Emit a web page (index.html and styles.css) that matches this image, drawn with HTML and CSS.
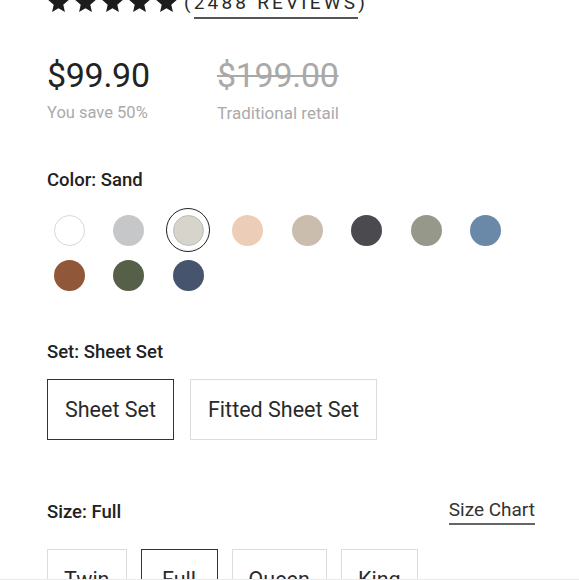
FILE: index.html
```html
<!DOCTYPE html>
<html>
<head>
<meta charset="utf-8">
<link rel="stylesheet" href="styles.css">
</head>
<body>
<main class="product">
  <div class="rating">
    <div class="stars">
      <svg viewBox="0 0 24 24" class="star"><path d="M12 1.5l3.1 7.1 7.7.7-5.8 5.1 1.7 7.6L12 18l-6.7 4 1.7-7.6-5.8-5.1 7.7-.7z"/></svg>
      <svg viewBox="0 0 24 24" class="star"><path d="M12 1.5l3.1 7.1 7.7.7-5.8 5.1 1.7 7.6L12 18l-6.7 4 1.7-7.6-5.8-5.1 7.7-.7z"/></svg>
      <svg viewBox="0 0 24 24" class="star"><path d="M12 1.5l3.1 7.1 7.7.7-5.8 5.1 1.7 7.6L12 18l-6.7 4 1.7-7.6-5.8-5.1 7.7-.7z"/></svg>
      <svg viewBox="0 0 24 24" class="star"><path d="M12 1.5l3.1 7.1 7.7.7-5.8 5.1 1.7 7.6L12 18l-6.7 4 1.7-7.6-5.8-5.1 7.7-.7z"/></svg>
      <svg viewBox="0 0 24 24" class="star"><path d="M12 1.5l3.1 7.1 7.7.7-5.8 5.1 1.7 7.6L12 18l-6.7 4 1.7-7.6-5.8-5.1 7.7-.7z"/></svg>
    </div>
    <span class="reviews">(<span class="reviews-link">2488 REVIEWS</span>)</span>
  </div>

  <div class="prices">
    <div class="price-col">
      <div class="price">$99.90</div>
      <div class="price-note">You save 50%</div>
    </div>
    <div class="price-col">
      <div class="price old">$199.00</div>
      <div class="price-note">Traditional retail</div>
    </div>
  </div>

  <section class="option color-option">
    <div class="option-label">Color: Sand</div>
    <div class="swatches">
      <button class="swatch"><span class="dot white"></span></button>
      <button class="swatch"><span class="dot" style="background:#c6c7c9"></span></button>
      <button class="swatch selected"><span class="dot" style="background:#d6d4cb"></span></button>
      <button class="swatch"><span class="dot" style="background:#ecceb8"></span></button>
      <button class="swatch"><span class="dot" style="background:#cbbdad"></span></button>
      <button class="swatch"><span class="dot" style="background:#4a4a4f"></span></button>
      <button class="swatch"><span class="dot" style="background:#96998a"></span></button>
      <button class="swatch"><span class="dot" style="background:#6a88a8"></span></button>
      <button class="swatch"><span class="dot" style="background:#905838"></span></button>
      <button class="swatch"><span class="dot" style="background:#566048"></span></button>
      <button class="swatch"><span class="dot" style="background:#46546e"></span></button>
    </div>
  </section>

  <section class="option set-option">
    <div class="option-label">Set: Sheet Set</div>
    <div class="choices">
      <button class="choice big active">Sheet Set</button>
      <button class="choice big">Fitted Sheet Set</button>
    </div>
  </section>

  <section class="option size-option">
    <div class="option-head">
      <div class="option-label">Size: Full</div>
      <a class="size-chart">Size Chart</a>
    </div>
    <div class="choices sizes">
      <button class="choice">Twin</button>
      <button class="choice active">Full</button>
      <button class="choice">Queen</button>
      <button class="choice">King</button>
    </div>
  </section>
</main>
<div class="bottom-edge"></div>
</body>
</html>
```

FILE: styles.css
```css
* { box-sizing: border-box; }
html, body { margin: 0; padding: 0; background: #fff; }
body {
  font-family: Roboto, "Liberation Sans", Arial, sans-serif;
  color: #222;
  overflow: hidden;
  height: 580px;
}
.product {
  padding: 0 44px 0 47px;
}
.rating {
  display: flex;
  align-items: center;
  margin-top: -12px;
  height: 28px;
}
.stars {
  display: flex;
  gap: 4px;
}
.star {
  width: 23px;
  height: 23px;
  fill: #1c1c1c;
}
.reviews {
  margin-left: 6px;
  font-size: 19px;
  letter-spacing: 3.2px;
  color: #2a2a2a;
}
.reviews-link {
  border-bottom: 2px solid #555;
  padding-bottom: 3px;
}
.prices {
  display: flex;
  margin-top: 39px;
}
.price-col {
  width: 170px;
}
.price {
  font-size: 34px;
  line-height: 40px;
  color: #222;
  letter-spacing: -0.3px;
}
.price.old {
  color: #a9a9a9;
  text-decoration: line-through;
  text-decoration-thickness: 2px;
}
.price-note {
  margin-top: 8px;
  font-size: 16.5px;
  color: #aaa;
}
.price-col + .price-col .price-note {
  font-size: 17px;
}
.option-label {
  font-size: 18.5px;
  line-height: 22px;
  font-weight: 500;
  color: #222;
}
.color-option {
  margin-top: 46px;
}
.swatches {
  display: grid;
  grid-template-columns: repeat(8, 44px);
  column-gap: 15.5px;
  row-gap: 1px;
  margin-top: 17px;
}
.swatch {
  width: 44px;
  height: 44px;
  padding: 0;
  border: 1.5px solid transparent;
  border-radius: 50%;
  background: none;
  display: flex;
  align-items: center;
  justify-content: center;
}
.swatch.selected {
  border-color: #222;
}
.dot {
  width: 31px;
  height: 31px;
  border-radius: 50%;
  display: block;
}
.swatch.selected .dot {
  border: 1px solid #bbb;
}
.dot.white {
  background: #fff;
  border: 1px solid #d8d8d8;
}
.set-option {
  margin-top: 44px;
}
.choices {
  display: flex;
  gap: 16px;
  margin-top: 16px;
}
.choice {
  font-family: inherit;
  background: #fff;
  border: 1px solid #dcdcdc;
  color: #2a2a2a;
  font-size: 21.5px;
  padding: 0 17px;
  height: 61px;
}
.choice.active {
  border-color: #333;
}
.size-option {
  margin-top: 58px;
}
.option-head {
  display: flex;
  justify-content: space-between;
  align-items: center;
}
.size-chart {
  font-size: 19px;
  color: #333;
  border-bottom: 2px solid #666;
  padding-bottom: 2px;
}
.sizes {
  gap: 14px;
  margin-top: 24px;
}
.sizes .choice {
  min-width: 77px;
  padding: 0 16px;
}
.bottom-edge {
  position: fixed;
  left: 0;
  right: 0;
  bottom: 0;
  height: 1px;
  background: #e9e9e9;
}
```
